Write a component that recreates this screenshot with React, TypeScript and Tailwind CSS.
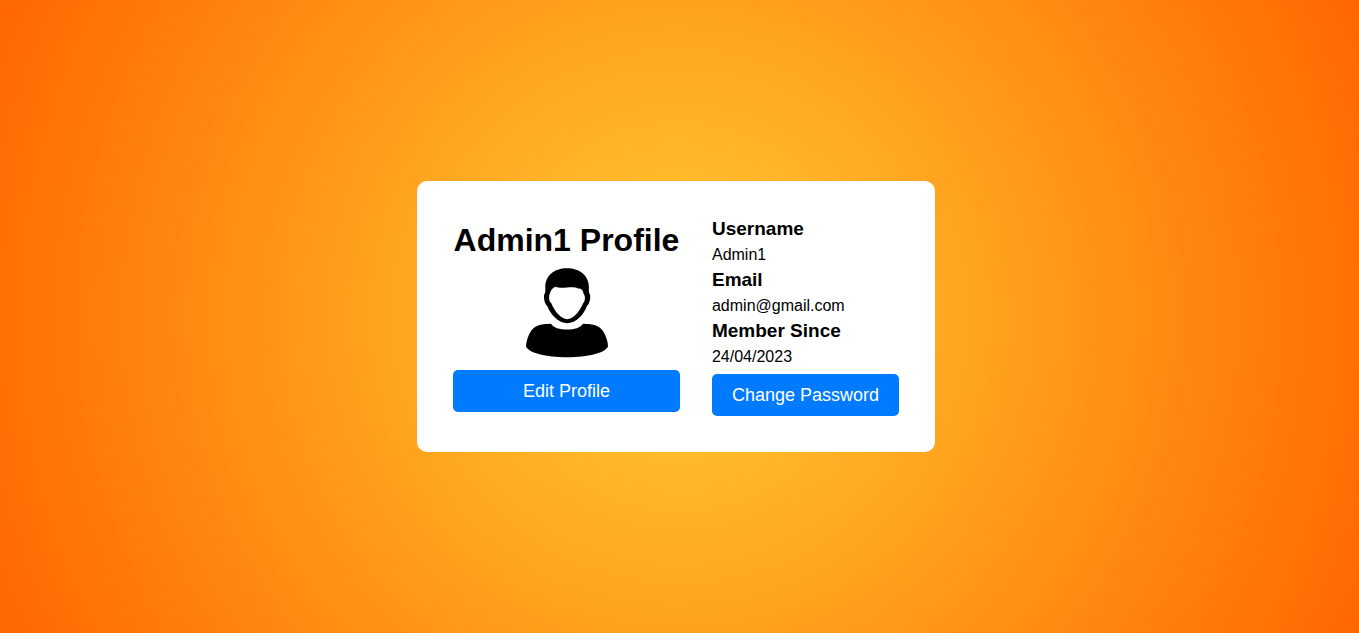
const details = [
  { label: 'Username', value: 'Admin1' },
  { label: 'Email', value: 'admin@gmail.com' },
  { label: 'Member Since', value: '24/04/2023' },
];

const buttonClass =
  'w-full cursor-pointer rounded-[5px] bg-[#007bff] px-5 py-2 text-lg leading-[26px] text-white hover:bg-[#0069d9]';

function Avatar() {
  return (
    <svg viewBox="-1 0 100 100" className="mt-1 mb-2 size-[100px]" role="img" aria-label="User avatar">
      <path
        fillRule="evenodd"
        d="M50 6.300C37 6.300 28.300 14 28.300 25C28.300 27.500 28.500 29 28.200 30.500C26 33 26.800 41 30.300 44C33.500 52.500 41.500 61.200 50.200 61.200C59 61.200 67 52.500 69.900 44C73.400 41 74.200 33 72 30.500C71.700 29 71.900 27.500 71.900 25C71.900 14 63 6.300 50 6.300ZM38.500 24.800C41 25.700 45 26 50 25.500C54 25 59 25 61.500 26.700C63.500 26.200 66 28.200 66.500 31.500C68.700 34.500 68.300 39 66 41.500C62.500 49.500 56.500 57.200 50.300 57.200C44 57.200 37.700 49.500 34.400 41.500C31.800 39 31.400 35 32.800 31.500C33.500 28.500 35.800 25.700 38.500 24.800Z"
      />
      <path d="M34 61.700C38 69.500 62 69.500 66 61.700C74 62 82 62.500 86 69C89 73.500 91 80 91 84.500C88 91 71 95.300 50 95.300C29 95.300 12 91 9 84.500C9 80 11 73.500 14 69C18 62.500 26 62 34 61.700Z" />
    </svg>
  );
}

export default function App() {
  return (
    <main className="flex min-h-screen items-center justify-center bg-[radial-gradient(circle,#ffcc33,#ff6600)] pr-[7px] font-['Liberation_Sans',Arial,sans-serif] text-black">
      <section className="flex items-center gap-8 rounded-[10px] bg-white p-9">
        <div className="flex min-w-[227px] flex-col items-center">
          <h1 className="pt-px text-[32px] leading-9 font-bold">Admin1 Profile</h1>
          <Avatar />
          <button type="button" className={buttonClass}>Edit Profile</button>
        </div>
        <div>
          <dl className="mb-1">
            {details.map(({ label, value }) => (
              <div key={label}>
                <dt className="text-[19px] leading-[23px] font-bold">{label}</dt>
                <dd className="pt-[3px] pb-px text-base">{value}</dd>
              </div>
            ))}
          </dl>
          <button type="button" className={buttonClass}>Change Password</button>
        </div>
      </section>
    </main>
  );
}
